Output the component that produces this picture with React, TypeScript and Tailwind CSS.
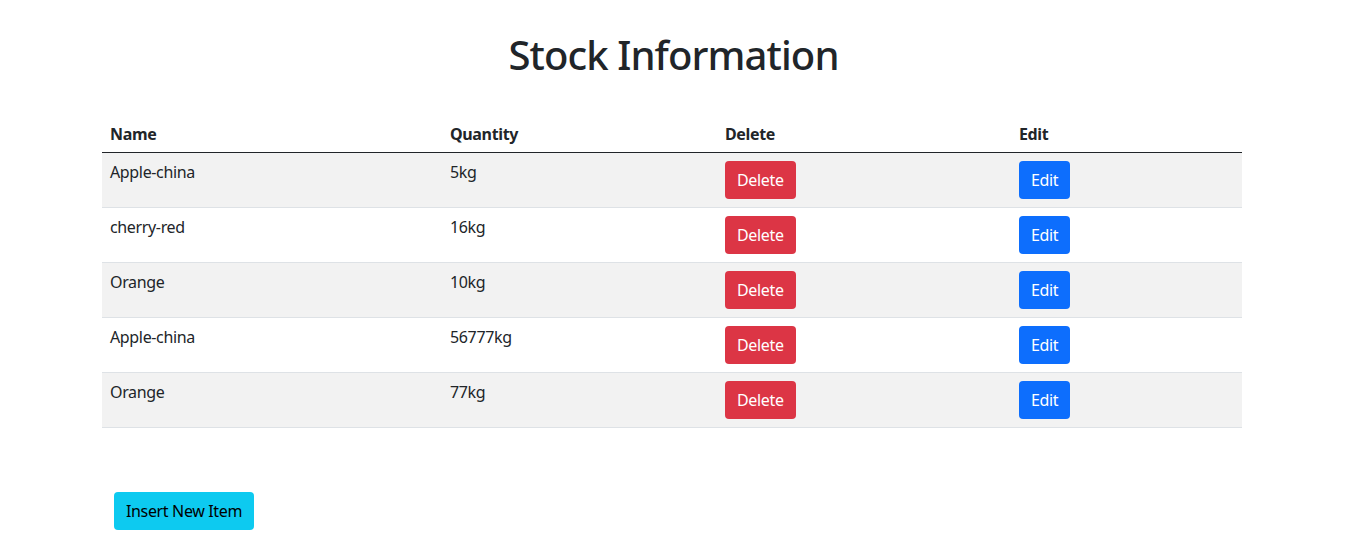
import React from 'react';

const items = [
    { name: 'Apple-china', quantity: '5kg' },
    { name: 'cherry-red', quantity: '16kg' },
    { name: 'Orange', quantity: '10kg' },
    { name: 'Apple-china', quantity: '56777kg' },
    { name: 'Orange', quantity: '77kg' },
];

const App: React.FC = () => {
    return (
        <div className="min-h-[559px] bg-white text-[#212529] font-['Segoe_UI','Noto_Sans',sans-serif] text-[16px] leading-[24px] tracking-[-0.35px]">
            <h1 className="pt-[31px] text-center text-[40px] leading-[48px] font-medium tracking-[-0.9px]">Stock Information</h1>

            <div className="ml-[102px] w-[1140px] mt-[33px]">
                <table className="w-full border-collapse">
                    <thead>
                        <tr className="border-b border-[#212529]">
                            <th className="w-[340px] px-2 pt-[10px] pb-[6px] text-left font-bold">Name</th>
                            <th className="w-[275px] px-2 pt-[10px] pb-[6px] text-left font-bold">Quantity</th>
                            <th className="w-[294px] px-2 pt-[10px] pb-[6px] text-left font-bold">Delete</th>
                            <th className="px-2 pt-[10px] pb-[6px] text-left font-bold">Edit</th>
                        </tr>
                    </thead>
                    <tbody>
                        {items.map((item, index) => (
                            <tr key={index} className={`border-b border-[#dee2e6] ${index % 2 === 0 ? 'bg-[#f2f2f2]' : 'bg-white'}`}>
                                <td className="px-2 pt-[7px] pb-2 align-top">{item.name}</td>
                                <td className="px-2 pt-[7px] pb-2 align-top">{item.quantity}</td>
                                <td className="px-2 py-2 align-top">
                                    <button className="h-[38px] rounded-[4px] bg-[#dc3545] px-3 text-white">Delete</button>
                                </td>
                                <td className="px-2 py-2 align-top">
                                    <button className="h-[38px] rounded-[4px] bg-[#0d6efd] px-3 text-white">Edit</button>
                                </td>
                            </tr>
                        ))}
                    </tbody>
                </table>

                <div className="mt-[64px] pl-3">
                    <button className="h-[38px] rounded-[4px] bg-[#0dcaf0] px-3 text-black">Insert New Item</button>
                </div>
            </div>
        </div>
    );
};

export default App;
